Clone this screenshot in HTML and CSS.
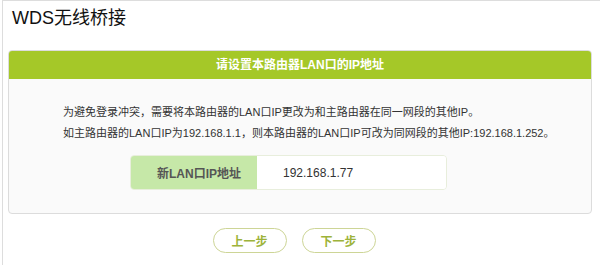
FILE: index.html
```html
<!DOCTYPE html>
<html lang="zh-CN">
<head>
  <meta charset="UTF-8">
  <meta name="viewport" content="width=device-width, initial-scale=1.0">
  <title>WDS无线桥接</title>
  <link rel="stylesheet" href="styles.css">
</head>
<body>

  <!-- Page frame -->
  <div class="page">
    <h1 class="title">WDS无线桥接</h1>

    <!-- Settings card -->
    <div class="card">
      <div class="card-head">请设置本路由器LAN口的IP地址</div>
      <div class="card-body">
        <p class="tip">为避免登录冲突，需要将本路由器的LAN口IP更改为和主路由器在同一网段的其他IP。</p>
        <p class="tip">如主路由器的LAN口IP为192.168.1.1，则本路由器的LAN口IP可改为同网段的其他IP:192.168.1.252。</p>

        <div class="field">
          <label class="field-label" for="lan-ip">新LAN口IP地址</label>
          <input class="field-input" id="lan-ip" type="text" value="192.168.1.77">
        </div>
      </div>
    </div>

    <!-- Step buttons -->
    <div class="actions">
      <button class="btn">上一步</button>
      <button class="btn">下一步</button>
    </div>
  </div>

</body>
</html>
```

FILE: styles.css
```css
* {
  margin: 0;
  padding: 0;
  box-sizing: border-box;
}

body {
  font-family: "Liberation Sans", "Noto Sans CJK SC", sans-serif;
  background-color: #fff;
  color: #333;
}

.page {
  margin-left: 2px;
  height: 265px;
  border-left: 1px solid #ddd;
  border-top: 1px solid #ddd;
  padding: 0 8px 0 5px;
}

.title {
  font-size: 18px;
  font-weight: normal;
  color: #111;
  height: 49px;
  padding: 5px 0 0 4px;
  line-height: 24px;
}

.card {
  border: 1px solid #dcdcdc;
  border-radius: 4px;
  background-color: #fafafa;
  overflow: hidden;
}

.card-head {
  background-color: #a5c828;
  color: #fff;
  font-size: 12px;
  font-weight: bold;
  text-align: center;
  height: 28px;
  line-height: 28px;
}

.card-body {
  padding: 23px 0 23px 54px;
}

.tip {
  font-size: 11px;
  line-height: 21px;
  color: #333;
}

.field {
  display: flex;
  margin: 11px 0 0 67px;
  width: 317px;
  height: 35px;
  border: 1px solid #e8eedc;
  border-radius: 4px;
  overflow: hidden;
}

.field-label {
  width: 126px;
  background-color: #c6e8a8;
  color: #555;
  font-size: 12px;
  font-weight: bold;
  display: flex;
  align-items: center;
  justify-content: center;
  padding-left: 10px;
}

.field-input {
  flex: 1;
  border: none;
  background-color: #fff;
  font-family: "Liberation Sans", "Noto Sans CJK SC", sans-serif;
  font-size: 12px;
  color: #333;
  padding-left: 26px;
  outline: none;
}

.actions {
  display: flex;
  justify-content: center;
  gap: 15px;
  margin-top: 14px;
  padding-right: 12px;
}

.btn {
  width: 74px;
  height: 25px;
  border: 1px solid #cdd596;
  border-radius: 13px;
  background-color: #fff;
  color: #9db33a;
  font-family: "Liberation Sans", "Noto Sans CJK SC", sans-serif;
  font-size: 12px;
  font-weight: bold;
}
```
